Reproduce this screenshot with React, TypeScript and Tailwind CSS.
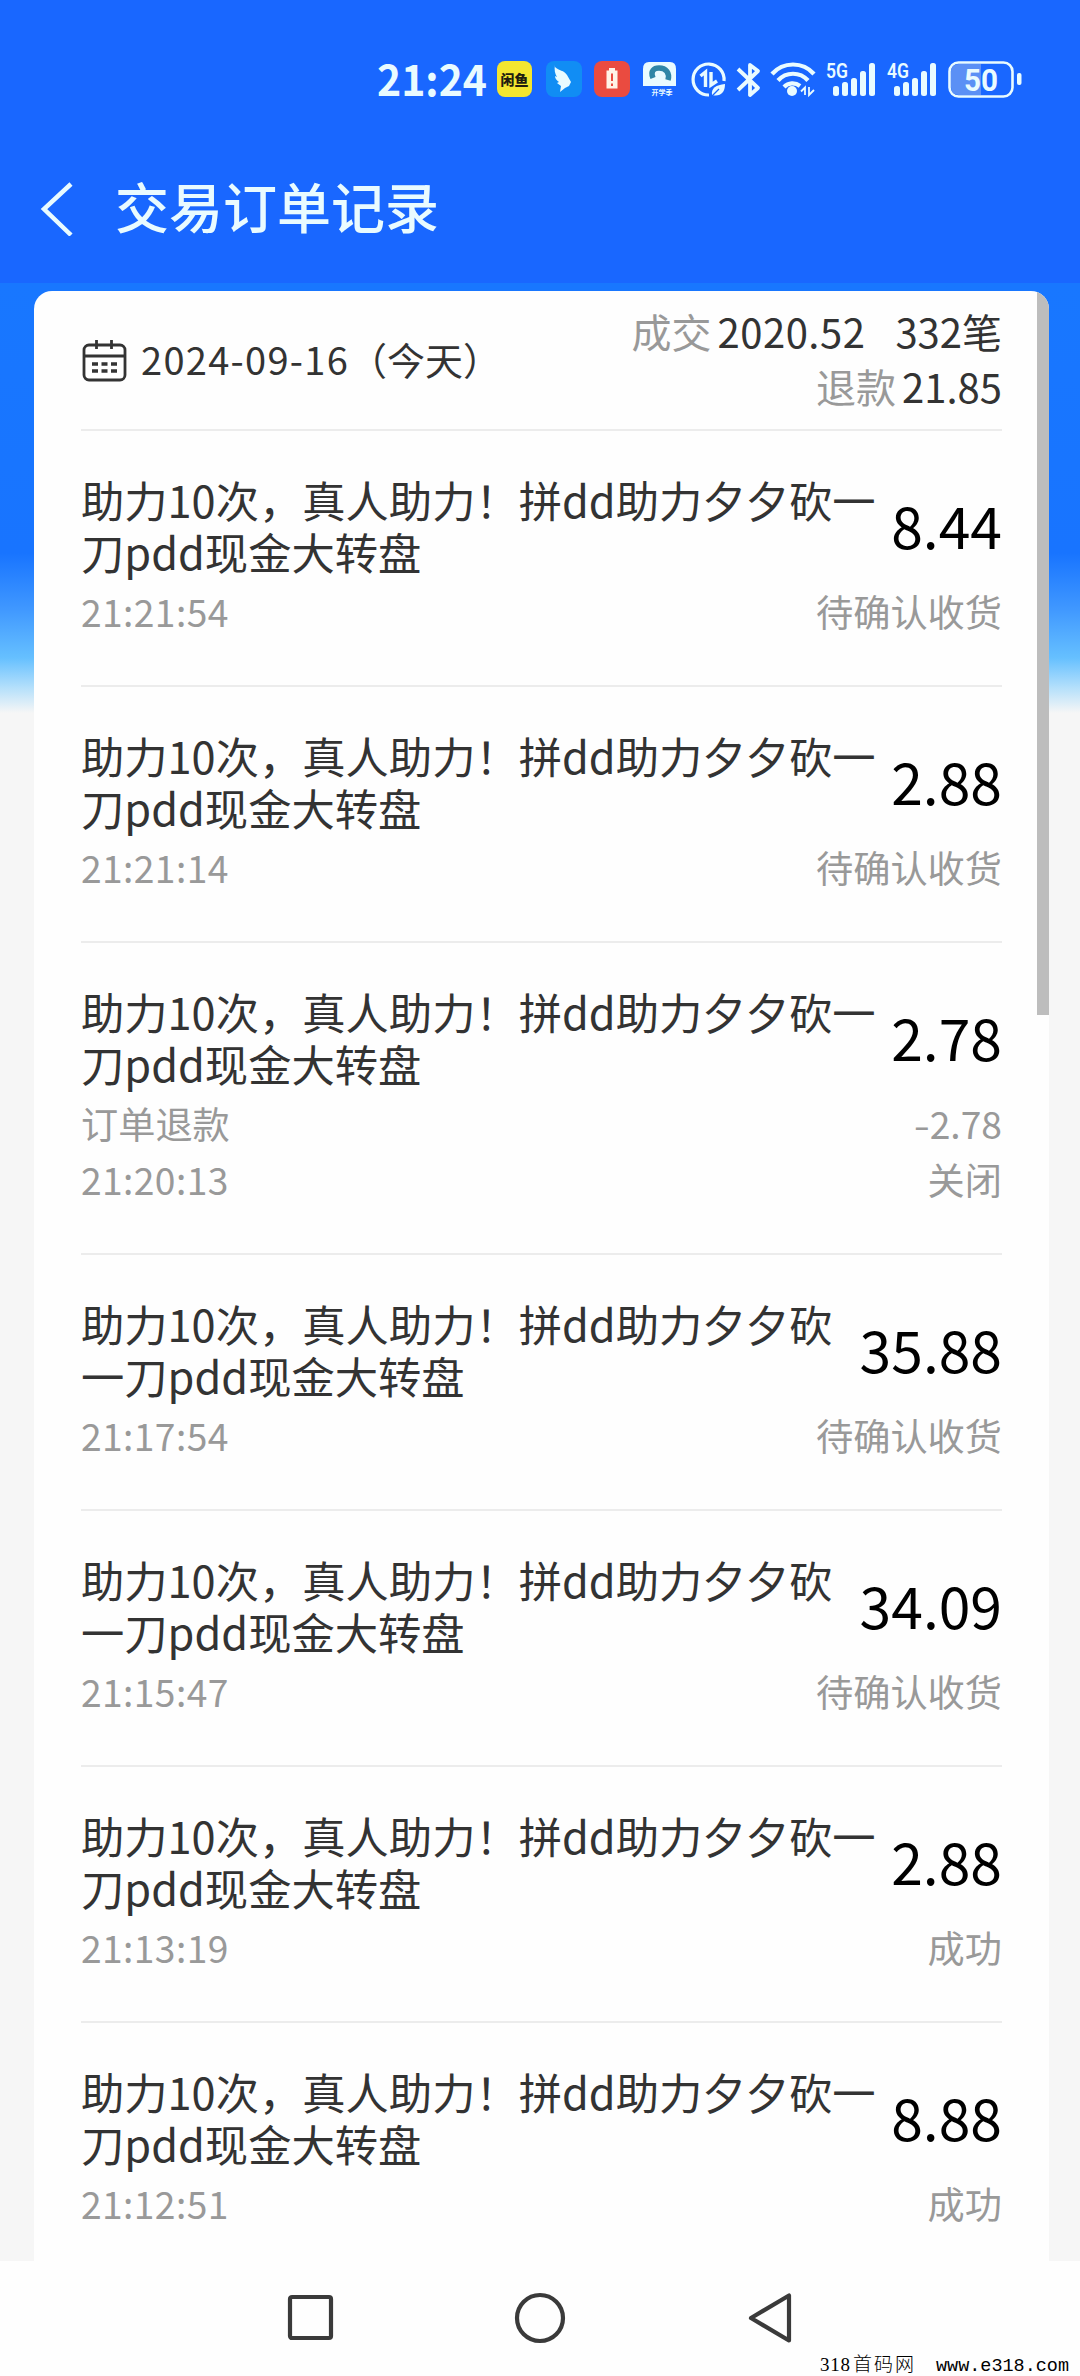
const CJK = "font-['Noto_Sans_CJK_SC',sans-serif]";

type Order = { lines: [string, string]; time: string; amount: string; status: string; refund?: string };

const A: [string, string] = ["助力10次，真人助力！拼dd助力夕夕砍一", "刀pdd现金大转盘"];
const B: [string, string] = ["助力10次，真人助力！拼dd助力夕夕砍", "一刀pdd现金大转盘"];

const orders: Order[] = [
  { lines: A, time: "21:21:54", amount: "8.44", status: "待确认收货" },
  { lines: A, time: "21:21:14", amount: "2.88", status: "待确认收货" },
  { lines: A, time: "21:20:13", amount: "2.78", status: "关闭", refund: "2.78" },
  { lines: B, time: "21:17:54", amount: "35.88", status: "待确认收货" },
  { lines: B, time: "21:15:47", amount: "34.09", status: "待确认收货" },
  { lines: A, time: "21:13:19", amount: "2.88", status: "成功" },
  { lines: A, time: "21:12:51", amount: "8.88", status: "成功" },
];

function Signal({ label, className }: { label: string; className: string }) {
  return (
    <svg className={`shrink-0 overflow-visible ${className}`} width="52" height="38" viewBox="0 0 52 38" fill="#e9fbff">
      <text x="1" y="17" fontFamily="Roboto, sans-serif" fontWeight="600" fontSize="21" textLength="22" lengthAdjust="spacingAndGlyphs">{label}</text>
      <rect x="8" y="25" width="6" height="10" rx="2.5" />
      <rect x="17" y="21" width="6" height="14" rx="2.5" />
      <rect x="26" y="17" width="6" height="18" rx="2.5" />
      <rect x="35" y="10" width="6" height="25" rx="2.5" />
      <rect x="44" y="2" width="6" height="33" rx="2.5" />
    </svg>
  );
}

function StatusBar() {
  return (
    <div className="flex h-[158px] items-start pl-[377px] pt-[61px] text-[#e9fbff]">
      <svg className="mr-[6px] shrink-0 overflow-visible" width="114" height="38" viewBox="0 0 114 38" fill="#e9fbff">
        <text x="0" y="35" fontFamily="Noto Sans CJK SC, sans-serif" fontWeight="700" fontSize="43" textLength="110" lengthAdjust="spacingAndGlyphs">21:24</text>
      </svg>
      <div className="flex h-[36px] w-[35px] shrink-0 items-center justify-center whitespace-nowrap rounded-lg bg-[#f4e62f] text-[14px] font-black leading-none text-[#221d10]">闲鱼</div>
      <svg className="ml-[14px] shrink-0" width="36" height="36" viewBox="0 0 36 36">
        <rect width="36" height="36" rx="8" fill="#118df4" />
        <path d="M9 6c4 4 9 3 12 8l4 7-2 4-4 2-5 4 1-6-4-3 2-1c-3-2-4-4-4-6l2 1c-2-3-3-7-2-12z" fill="#e9fbff" />
      </svg>
      <svg className="ml-[12px] shrink-0" width="36" height="36" viewBox="0 0 36 36">
        <rect width="36" height="36" rx="8" fill="#ea4b40" />
        <path d="M15 7h6v2.500h2.500v18h-11V9.500H15z" fill="#fff3e8" />
        <path d="M18 12.500v7.500M18 22.500v2.500" stroke="#ea4b40" strokeWidth="2" />
      </svg>
      <svg className="ml-[11px] shrink-0" width="38" height="38" viewBox="0 0 38 38">
        <path d="M8 1h21q6 0 6 7v17H2V8q0-7 6-7z" fill="#e9fbff" />
        <path d="M12 17c-3-7 1-10 6-10 7 0 11 5 9 12" fill="none" stroke="#2f86a6" strokeWidth="5.500" />
        <text x="10.500" y="34" fontFamily="Noto Sans CJK SC, sans-serif" fontSize="7" fontWeight="700" fill="#e9fbff">开学季</text>
      </svg>
      <svg className="ml-[12px] shrink-0" width="36" height="37" viewBox="0 0 36 37" fill="none" stroke="#e9fbff" strokeWidth="3.200">
        <path d="M33 20A15.500 15.500 0 1 0 18 34" />
        <path d="M9.500 15l5-4V26M20 11v13l6-4" strokeWidth="3.400" />
        <path d="M21 34c-1-7 4-10 13-11 0 9-5 13-13 11z" fill="#e9fbff" stroke="none" />
        <path d="M20 36l8-8" stroke="#1967ff" strokeWidth="1.200" />
      </svg>
      <svg className="ml-[9px] shrink-0" width="26" height="38" viewBox="0 0 26 38" fill="none" stroke="#e9fbff" strokeWidth="3.800" strokeLinejoin="round">
        <path d="M2 8l20 19-8 7V4l8 6L2 29" />
      </svg>
      <svg className="ml-[8px] shrink-0" width="46" height="38" viewBox="0 0 46 38" fill="none" stroke="#e9fbff" strokeWidth="4.200">
        <path d="M2 13a28 28 0 0 1 42 0M8 19.500a20 20 0 0 1 30 0M14 26a12 12 0 0 1 16-1" />
        <circle cx="22" cy="30" r="5" fill="#e9fbff" stroke="none" />
        <path d="M31 30.500l4-4V34M39 26v8l5-5" strokeWidth="1.800" />
      </svg>
      <Signal label="5G" className="ml-[9px]" />
      <Signal label="4G" className="ml-[9px]" />
      <svg className="ml-[10px] shrink-0" width="76" height="40" viewBox="0 0 76 40">
        <rect x="1.500" y="1.500" width="63" height="34" rx="9" fill="#1967ff" stroke="#e9fbff" strokeWidth="2.600" />
        <path d="M11 3H33V34H11q-8 0-8-8V11q0-8 8-8z" fill="#5b90f5" />
        <rect x="69" y="12" width="4.500" height="12" rx="2" fill="#e9fbff" />
        <text x="16" y="29.500" fontFamily="Roboto, sans-serif" fontWeight="700" fontSize="31" fill="#e9fbff" textLength="34" lengthAdjust="spacingAndGlyphs">50</text>
      </svg>
    </div>
  );
}

function Item({ o }: { o: Order }) {
  return (
    <div className={`border-t-2 border-[#ececec] pt-[42px] ${o.refund ? "h-[312px]" : "h-[256px]"}`}>
      <div className="flex h-[104px] items-center justify-between whitespace-nowrap">
        <div className="text-[43.300px] leading-[52px] text-[#333]">
          <div>{o.lines[0]}</div>
          <div>{o.lines[1]}</div>
        </div>
        <div className="pb-[2px] text-[57px] leading-[60px] text-black">{o.amount}</div>
      </div>
      {o.refund && (
        <div className="mt-[9px] flex h-[50px] items-center justify-between text-[37.200px] leading-[50px] text-[#999]">
          <span>订单退款</span>
          <span className="flex items-center">
            <span className="inline-block origin-right scale-x-125">-</span>
            {o.refund}
          </span>
        </div>
      )}
      <div className={`flex h-[50px] items-center justify-between text-[37.200px] leading-[50px] text-[#999] ${o.refund ? "mt-[6px]" : "mt-[9px]"}`}>
        <span className="tracking-[0.400px]">{o.time}</span>
        <span>{o.status}</span>
      </div>
    </div>
  );
}

export default function App() {
  return (
    <div className={`relative flex h-[2376px] w-[1080px] flex-col overflow-hidden bg-[#fefefe] ${CJK}`}>
      <header className="h-[283px] bg-[#1967ff]">
        <StatusBar />
        <div className="flex h-[100px] items-center pl-[39px] text-[#e9fbff]">
          <svg width="36" height="56" viewBox="0 0 36 56" fill="none" stroke="#e9fbff" strokeWidth="4.500">
            <path d="M32 4L5 29l27 26" />
          </svg>
          <h1 className="ml-[40px] pb-1 text-[54px] font-medium leading-none">交易订单记录</h1>
        </div>
      </header>
      <main className="h-[1978px] bg-[#f6f6f6] bg-[linear-gradient(to_bottom,#1877ff_0px,#1874ff_270px,#3f97ff_325px,#66c0ff_375px,#b5e0fb_405px,#f6f6f6_430px)] pl-[34px] pr-[31px] pt-2">
        <section className="relative h-full overflow-hidden rounded-t-[18px] bg-[#fefefe] px-[47px]">
          <div className="flex h-[138px] justify-between whitespace-nowrap text-[#333]">
            <div className="flex h-[138px] items-center">
              <svg width="46" height="44" viewBox="0 0 46 44" fill="none" stroke="#333" strokeWidth="2.800">
                <rect x="3" y="7" width="41" height="35" rx="5" />
                <path d="M3 18h41M15.500 2v9M30.500 2v9" />
                <path d="M11 26h6m3.500 0h6m3.500 0h6M11 33h6m3.500 0h6m3.500 0h6" strokeWidth="3.400" />
              </svg>
              <div className="ml-[14px] pb-[3px] text-[38px]">
                <span className="tracking-[1.300px]">2024-09-16</span>
                <span>（今天）</span>
              </div>
            </div>
            <div className="pt-[13px] text-right text-[40px] leading-[55px]">
              <div><span className="mr-1.5 text-[#999]">成交</span><span className="tracking-[0.500px]">2020.52</span><span className="ml-[30px]">332笔</span></div>
              <div><span className="mr-1.5 text-[#999]">退款</span>21.85</div>
            </div>
          </div>
          {orders.map((o) => <Item key={o.time} o={o} />)}
          <div className="absolute right-0 top-0 h-[724px] w-3 bg-[#bdbdbd]" />
        </section>
      </main>
      <nav className="flex h-[113px] items-center pl-[286px]">
        <svg width="50" height="50" viewBox="0 0 50 50" fill="none" stroke="#3a3a3a" strokeWidth="4.200"><rect x="4" y="4" width="41" height="41" rx="2" /></svg>
        <svg className="ml-[178px]" width="52" height="52" viewBox="0 0 52 52" fill="none" stroke="#3a3a3a" strokeWidth="4.200"><circle cx="26" cy="26" r="23" /></svg>
        <svg className="ml-[181px]" width="46" height="52" viewBox="0 0 46 52" fill="none" stroke="#3a3a3a" strokeWidth="4.200" strokeLinejoin="round"><path d="M42 3.500v45L4 26z" /></svg>
      </nav>
      <svg className="absolute bottom-0 left-[816px] overflow-visible" width="264" height="26" viewBox="0 0 264 26" fill="#000">
        <text x="4" y="21" fontFamily="Liberation Serif, serif" fontSize="19" textLength="30" lengthAdjust="spacing">318</text>
        <text x="37" y="21" fontFamily="Noto Sans CJK SC, sans-serif" fontWeight="300" fontSize="19" textLength="61" lengthAdjust="spacing">首码网</text>
        <text x="120" y="21" fontFamily="Liberation Mono, monospace" fontSize="18" textLength="133" lengthAdjust="spacingAndGlyphs">www.e318.com</text>
      </svg>
    </div>
  );
}
